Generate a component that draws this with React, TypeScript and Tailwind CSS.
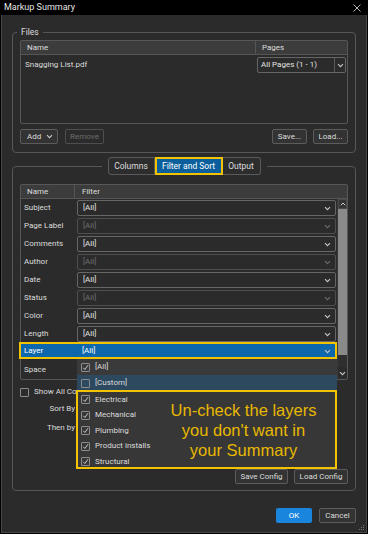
import React from "react";

function Chev({ dim = false }: { dim?: boolean }) {
  const c = dim ? "#6c6c6c" : "#c8c8c8";
  return (
    <svg width="7" height="5" viewBox="0 0 7 5" className="shrink-0">
      <path d="M1 1.2 L3.5 3.7 L6 1.2" fill="none" stroke={c} strokeWidth="1.1" />
    </svg>
  );
}

function Check({ checked }: { checked: boolean }) {
  return (
    <div className="w-[9px] h-[9px] shrink-0 border border-[#8c8c8c] rounded-[1px] flex items-center justify-center">
      {checked && (
        <svg width="7" height="7" viewBox="0 0 7 7">
          <path d="M1.2 3.8 L2.9 5.5 L6 1.2" fill="none" stroke="#d6d6d6" strokeWidth="0.9" />
        </svg>
      )}
    </div>
  );
}

function Sel({ text, dim = false }: { text: string; dim?: boolean }) {
  return (
    <div
      className={
        dim
          ? "h-[16px] flex items-center justify-between border border-[#4e4e4e] rounded-[2px] pl-[5px] pr-[4px] text-[#6e6e6e]"
          : "h-[16px] flex items-center justify-between border border-[#666666] rounded-[2px] pl-[5px] pr-[4px] text-[#e2e2e2]"
      }
    >
      <span>{text}</span>
      <Chev dim={dim} />
    </div>
  );
}

const rows: [string, boolean][] = [
  ["Subject", false],
  ["Page Label", true],
  ["Comments", false],
  ["Author", true],
  ["Date", false],
  ["Status", true],
  ["Color", false],
  ["Length", false],
  ["Layer", false],
  ["Space", false],
];

const layers = ["Electrical", "Mechanical", "Plumbing", "Product installs", "Structural"];

function Dropdown() {
  return (
    <div className="absolute left-[56px] top-[16px] w-[260px] z-20 bg-[#383838] flex flex-col text-[#dcdcdc]">
      <div className="h-[16px] flex items-center pl-[4px] gap-[5px] bg-[#3a3a3a]">
        <Check checked />
        <span>[All]</span>
      </div>
      <div className="h-[16px] flex items-center pl-[4px] gap-[5px] bg-[#2c4960]">
        <Check checked={false} />
        <span>[Custom]</span>
      </div>
      <div className="h-[79px] -mt-[1px] -ml-[1px] border-2 border-[#f2c300] flex overflow-hidden bg-[#373737]">
        <div className="w-[74px] flex flex-col">
          {layers.map((l) => (
            <div key={l} className="h-[15.5px] shrink-0 flex items-center pl-[3px] gap-[5px] whitespace-nowrap">
              <Check checked />
              <span>{l}</span>
            </div>
          ))}
        </div>
        <div className="flex-1 flex flex-col items-center justify-center font-['Liberation_Sans',Arial,sans-serif] text-[16.5px] leading-[20px] text-[#e8b800]">
          <span>Un-check the layers</span>
          <span>you don't want in</span>
          <span>your Summary</span>
        </div>
      </div>
    </div>
  );
}

export default function App() {
  return (
    <div className="w-[368px] h-[534px] bg-black flex flex-col font-['Roboto',sans-serif] text-[8px] text-[#dcdcdc] overflow-hidden">
      <div className="h-[15px] shrink-0 flex items-center justify-between pl-[4px] pr-[7px] text-[9px] text-[#e6e6e6]">
        <span>Markup Summary</span>
        <svg width="8" height="8" viewBox="0 0 8 8">
          <path d="M0.5 0.5 L7.5 7.5 M7.5 0.5 L0.5 7.5" stroke="#c8c8c8" strokeWidth="0.9" />
        </svg>
      </div>
      <div className="flex-1 mx-[1px] mb-[1px] border border-t-0 border-[#474747] bg-[#2b2b2b] flex flex-col px-[10px] pt-[12px] relative">
        {/* Files */}
        <fieldset className="border border-[#575757] rounded-[4px] px-[7px] pb-[8px] min-w-0">
          <legend className="h-[10px] leading-[10px] -ml-[3px] px-[4px] text-[8.5px] text-[#dcdcdc]">Files</legend>
          <div className="mt-[3px] h-[84px] border border-[#575757] rounded-[2px] flex flex-col">
            <div className="h-[14px] shrink-0 flex bg-[#3c3c3c] border-b border-[#555555]">
              <div className="flex-1 pl-[6px] flex items-center">Name</div>
              <div className="w-[92px] border-l border-[#555555] pl-[6px] flex items-center">Pages</div>
            </div>
            <div className="flex pt-[2px]">
              <div className="flex-1 pl-[4px] flex items-center">Snagging List.pdf</div>
              <div className="w-[92px] pl-[2px] pr-[1px]">
                <div className="h-[16px] flex border border-[#666666] rounded-[2px]">
                  <div className="flex-1 pl-[3px] flex items-center text-[#e2e2e2]">All Pages (1 - 1)</div>
                  <div className="w-[11px] border-l border-[#5a5a5a] flex items-center justify-center">
                    <Chev />
                  </div>
                </div>
              </div>
            </div>
          </div>
          <div className="mt-[5px] flex justify-between">
            <div className="flex gap-[7px]">
              <div className="w-[38px] h-[15px] flex items-center justify-between pl-[6px] pr-[4px] border border-[#5c5c5c] rounded-[2px] bg-[#333333]">
                <span>Add</span>
                <Chev />
              </div>
              <div className="w-[39px] h-[15px] flex items-center justify-center border border-[#4e4e4e] rounded-[2px] text-[#6e6e6e]">
                Remove
              </div>
            </div>
            <div className="flex gap-[6px]">
              <div className="w-[35px] h-[15px] flex items-center justify-center border border-[#5c5c5c] rounded-[2px] bg-[#333333]">
                Save...
              </div>
              <div className="w-[35px] h-[15px] flex items-center justify-center border border-[#5c5c5c] rounded-[2px] bg-[#333333]">
                Load...
              </div>
            </div>
          </div>
        </fieldset>

        {/* Filter and Sort */}
        <fieldset className="mt-[4px] border border-[#575757] rounded-[4px] px-[7px] pb-[6px] min-w-0">
          <legend className="mx-auto px-[6px]">
            <div className="flex h-[18px] text-[8.5px]">
              <div className="w-[47px] flex items-center justify-center border border-[#5a5a5a] rounded-l-[3px] bg-[#2d2d2d]">
                Columns
              </div>
              <div className="w-[68px] flex items-center justify-center border-2 border-[#f2c300] bg-[#0b5f9c] text-white">
                Filter and Sort
              </div>
              <div className="w-[38px] flex items-center justify-center border border-l-0 border-[#5a5a5a] rounded-r-[3px] bg-[#2d2d2d]">
                Output
              </div>
            </div>
          </legend>
          <div className="mt-[9px] border border-[#575757] rounded-[2px] flex flex-col">
            <div className="h-[14px] shrink-0 flex bg-[#3c3c3c] border-b border-[#555555]">
              <div className="w-[53px] pl-[6px] flex items-center">Name</div>
              <div className="flex-1 border-l border-[#555555] pl-[7px] flex items-center">Filter</div>
            </div>
            <div className="flex">
              <div className="flex-1 flex flex-col">
                {rows.map(([name, dim]) =>
                  name === "Layer" ? (
                    <div key={name} className="relative h-[18px] flex">
                      <div className="absolute left-[-2px] right-0 top-[-1px] bottom-[2px] border-2 border-[#f2c300] bg-[#0c67ac]" />
                      <div className="relative w-[53px] pl-[3px] pb-[2px] flex items-center text-white">{name}</div>
                      <div className="relative flex-1 pl-[8px] pr-[6px] pb-[2px] flex items-center justify-between text-white">
                        <span>[All]</span>
                        <Chev />
                      </div>
                      <Dropdown />
                    </div>
                  ) : (
                    <div key={name} className="h-[18px] flex items-center">
                      <div className="w-[53px] pl-[3px]">{name}</div>
                      <div className="flex-1 pl-[3px] pr-[1px]">
                        <Sel text="[All]" dim={dim} />
                      </div>
                    </div>
                  )
                )}
              </div>
              <div className="w-[10px] flex flex-col border-l border-[#3a3a3a]">
                <div className="h-[10px] flex items-center justify-center border border-[#4a4a4a] bg-[#333333]">
                  <svg width="6" height="4" viewBox="0 0 6 4">
                    <path d="M0.8 3.2 L3 1 L5.2 3.2" fill="none" stroke="#d0d0d0" strokeWidth="1" />
                  </svg>
                </div>
                <div className="h-[146px] bg-[#8a8a8a]" />
                <div className="flex-1 bg-[#2f2f2f]" />
                <div className="h-[12px] flex items-center justify-center">
                  <Chev />
                </div>
              </div>
            </div>
          </div>

          <div className="mt-[6px] h-[12px] flex items-center gap-[5px]">
            <div className="w-[9px] h-[9px] border border-[#8a8a8a] rounded-[1px]" />
            <span>Show All Columns</span>
          </div>
          <div className="mt-[2px] h-[18px] flex items-center">
            <div className="w-[55px] text-right">Sort By</div>
          </div>
          <div className="mt-[1px] h-[18px] flex items-center">
            <div className="w-[55px] text-right">Then by</div>
          </div>
          <div className="mt-[32px] flex justify-end gap-[6px]">
            <div className="w-[53px] h-[15px] flex items-center justify-center border border-[#5c5c5c] rounded-[2px] bg-[#333333]">
              Save Config
            </div>
            <div className="w-[54px] h-[15px] flex items-center justify-center border border-[#5c5c5c] rounded-[2px] bg-[#333333]">
              Load Config
            </div>
          </div>
        </fieldset>

        <div className="mt-[17px] flex justify-end gap-[7px]">
          <div className="w-[36px] h-[15px] flex items-center justify-center rounded-[2px] bg-[#1a85dd] text-white">OK</div>
          <div className="w-[37px] h-[15px] flex items-center justify-center border border-[#5c5c5c] rounded-[2px] bg-[#333333]">
            Cancel
          </div>
        </div>

        <svg className="absolute right-[1px] bottom-[1px]" width="6" height="6" viewBox="0 0 6 6">
          <rect x="4" y="0" width="1" height="1" fill="#777" />
          <rect x="2" y="2" width="1" height="1" fill="#777" />
          <rect x="4" y="2" width="1" height="1" fill="#777" />
          <rect x="0" y="4" width="1" height="1" fill="#777" />
          <rect x="2" y="4" width="1" height="1" fill="#777" />
          <rect x="4" y="4" width="1" height="1" fill="#777" />
        </svg>
      </div>
    </div>
  );
}
